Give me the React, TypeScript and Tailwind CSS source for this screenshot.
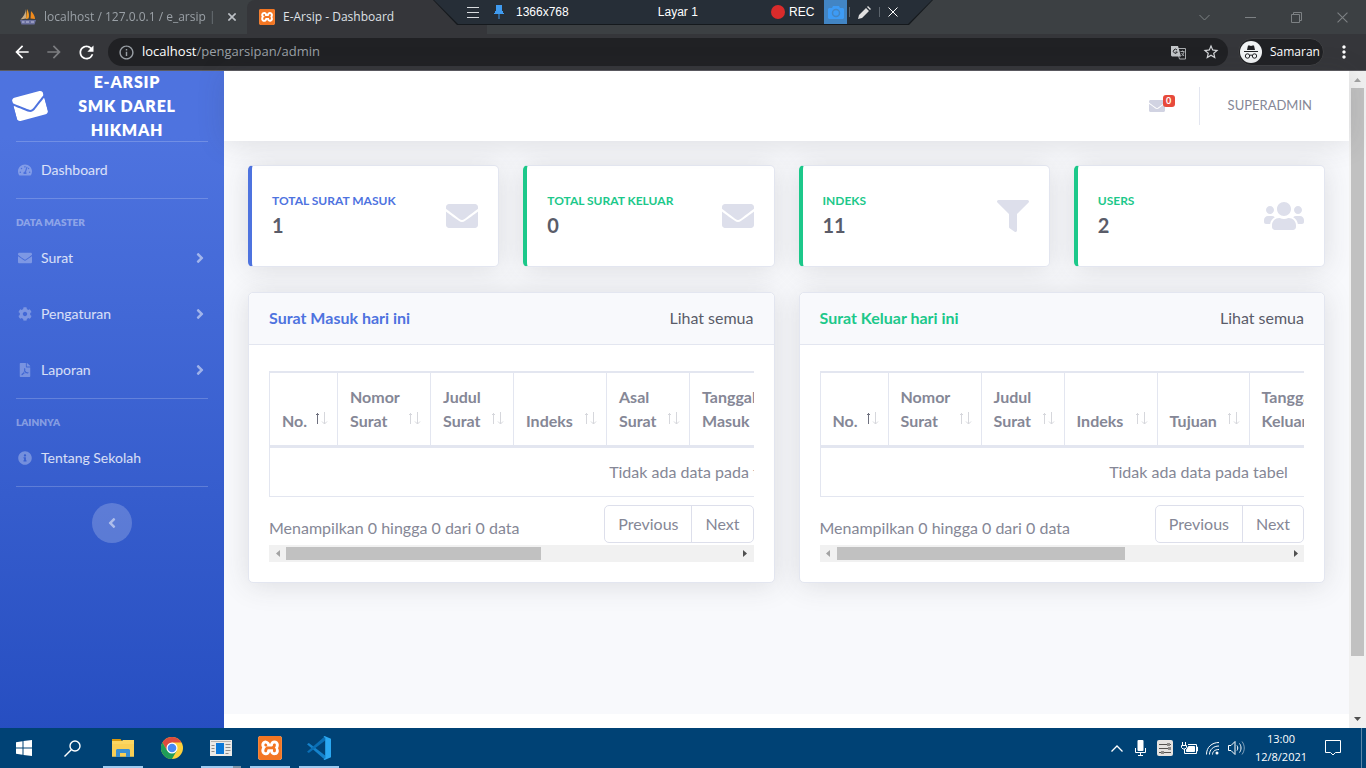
import type { ReactNode } from 'react';
import {
  FaAngleLeft,
  FaAngleRight,
  FaCog,
  FaEnvelope,
  FaFilePdf,
  FaFilter,
  FaInfoCircle,
  FaTachometerAlt,
  FaUsers,
} from 'react-icons/fa';
import { MdArrowBack, MdArrowForward, MdInfoOutline, MdMoreVert, MdRefresh, MdStarBorder } from 'react-icons/md';
import { SiXampp } from 'react-icons/si';

interface Column {
  label: string;
  width: string;
}

interface PanelProps {
  title: string;
  titleColor: string;
  tableWidth: string;
  thumbWidth: string;
  columns: Column[];
}

const STATS = [
  { label: 'Total Surat Masuk', value: 1, icon: <FaEnvelope />, border: 'border-l-[#4e73df]', text: 'text-[#4e73df]' },
  { label: 'Total Surat Keluar', value: 0, icon: <FaEnvelope />, border: 'border-l-[#1cc88a]', text: 'text-[#1cc88a]' },
  { label: 'Indeks', value: 11, icon: <FaFilter />, border: 'border-l-[#1cc88a]', text: 'text-[#1cc88a]' },
  { label: 'Users', value: 2, icon: <FaUsers size={40} />, border: 'border-l-[#1cc88a]', text: 'text-[#1cc88a]' },
];

const MASUK_COLUMNS: Column[] = [
  { label: 'No.', width: 'w-[68px]' },
  { label: 'Nomor Surat', width: 'w-[93px]' },
  { label: 'Judul Surat', width: 'w-[83px]' },
  { label: 'Indeks', width: 'w-[93px]' },
  { label: 'Asal Surat', width: 'w-[83px]' },
  { label: 'Tanggal Masuk', width: 'w-[100px]' },
  { label: '', width: 'w-[338px]' },
];

const KELUAR_COLUMNS: Column[] = [
  { label: 'No.', width: 'w-[68px]' },
  { label: 'Nomor Surat', width: 'w-[93px]' },
  { label: 'Judul Surat', width: 'w-[83px]' },
  { label: 'Indeks', width: 'w-[93px]' },
  { label: 'Tujuan', width: 'w-[92px]' },
  { label: 'Tanggal Keluar', width: 'w-[100px]' },
  { label: '', width: 'w-[228px]' },
];

export default function App() {
  return (
    <div className="flex h-screen flex-col overflow-hidden font-['Open_Sans',sans-serif]">
      <BrowserChrome />
      <div className="flex min-h-0 flex-1 font-['Lato',sans-serif] text-[#858796]">
        <Sidebar />
        <div className="flex min-w-0 flex-1 flex-col bg-[#f8f9fc]">
          <Topbar />
          <main className="flex flex-1 flex-col gap-[25px] px-6 pt-6">
            <div className="grid grid-cols-4 gap-6">
              {STATS.map((s) => (
                <div
                  key={s.label}
                  className={`flex h-[102px] items-center justify-between rounded-[5px] border border-l-4 border-[#e3e6f0] bg-white px-5 shadow-[0_2px_28px_rgba(58,59,69,0.15)] ${s.border}`}
                >
                  <div>
                    <div className={`text-[12px] leading-4 font-bold uppercase ${s.text}`}>{s.label}</div>
                    <div className="mt-0.5 text-xl leading-7 font-bold text-[#5a5c69]">{s.value}</div>
                  </div>
                  <span className="text-[32px] text-[#dddfeb]">{s.icon}</span>
                </div>
              ))}
            </div>
            <div className="grid grid-cols-2 gap-6">
              <TablePanel
                title="Surat Masuk hari ini"
                titleColor="text-[#4e73df]"
                tableWidth="w-[858px]"
                thumbWidth="w-[255px]"
                columns={MASUK_COLUMNS}
              />
              <TablePanel
                title="Surat Keluar hari ini"
                titleColor="text-[#1cc88a]"
                tableWidth="w-[757px]"
                thumbWidth="w-[288px]"
                columns={KELUAR_COLUMNS}
              />
            </div>
          </main>
          <footer className="h-3.5 bg-white" />
        </div>
        <PageScrollbar />
      </div>
      <Taskbar />
    </div>
  );
}

/* ---------- browser ---------- */

function BrowserChrome() {
  return (
    <header className="relative border-b border-[#5c5b60] bg-[#35363a]">
      <div className="flex h-[34px] bg-[#3c4043] text-[12px]">
        <div className="flex w-[247px] items-center rounded-br-lg pr-2.5 pl-5 text-[#9aa0a6]">
          <SailLogo />
          <span className="ml-2 w-[176px] overflow-hidden whitespace-nowrap [mask-image:linear-gradient(to_right,black_92%,transparent)]">
            localhost / 127.0.0.1 / e_arsip | php
          </span>
          <button aria-label="Close tab" className="ml-2 text-[#bdc1c6]">
            <CrossIcon size={8} weight={2} />
          </button>
        </div>
        <div className="flex w-[240px] items-center gap-2 rounded-t-lg bg-[#35363a] pl-3 text-[#dfe1e5]">
          <XamppLogo size={16} />
          <span>E-Arsip - Dashboard</span>
        </div>
        <div className="flex flex-1 items-center justify-end gap-[35px] pr-[18px] text-[#7d8184]">
          <button aria-label="Search tabs">
            <svg width="11" height="11" viewBox="0 0 11 11" fill="none" stroke="currentColor">
              <path d="M.5 3l5 5 5-5" />
            </svg>
          </button>
          <button aria-label="Minimize">
            <svg width="11" height="11" viewBox="0 0 11 11" fill="none" stroke="currentColor">
              <path d="M0 5.500h11" />
            </svg>
          </button>
          <button aria-label="Restore">
            <svg width="11" height="11" viewBox="0 0 11 11" fill="none" stroke="currentColor">
              <path d="M.5 2.500h8v8h-8zM2.500 2.500v-2h8v8h-2" />
            </svg>
          </button>
          <button aria-label="Close window">
            <CrossIcon size={11} weight={1} />
          </button>
        </div>
      </div>

      <div className="flex h-9 items-center pr-3 pl-3 text-white">
        <button aria-label="Back" className="w-8"><MdArrowBack size={20} /></button>
        <button aria-label="Forward" className="w-8 text-[#7c7d80]"><MdArrowForward size={20} /></button>
        <button aria-label="Reload" className="w-8"><MdRefresh size={21} /></button>
        <div className="flex h-7 flex-1 items-center rounded-full bg-[#202124] pr-2 pl-2.5">
          <MdInfoOutline size={17} className="text-[#9aa0a6]" />
          <div className="ml-[7px] flex-1 text-[13px] text-[#9aa0a6]">
            <span className="text-white">localhost</span>/pengarsipan/admin
          </div>
          <TranslateIcon />
          <MdStarBorder size={18} className="ml-4 text-[#d5d7da]" />
        </div>
        <div className="ml-2.5 flex h-7 w-[86px] items-center gap-2 rounded-full border border-[#3f4043] bg-[#202124] pl-px text-[12px]">
          <IncognitoIcon />
          <span>Samaran</span>
        </div>
        <button aria-label="Menu" className="ml-2.5"><MdMoreVert size={20} /></button>
      </div>

      <RecorderBar />
    </header>
  );
}

// Floating capture bar pinned to the top centre of the screen
function RecorderBar() {
  return (
    <div className="absolute top-0 left-1/2 w-[500px] -translate-x-1/2 bg-[#15191d] [clip-path:polygon(0_0,100%_0,calc(100%-24px)_100%,24px_100%)]">
      <div className="mx-px mb-px flex h-6 items-center bg-[#262e37] pr-[34px] pl-[33px] font-['Liberation_Sans',sans-serif] text-[12px] text-white [clip-path:polygon(0_0,100%_0,calc(100%-24px)_100%,24px_100%)]">
        <button aria-label="Menu">
          <svg width="12" height="12" viewBox="0 0 12 12" stroke="#d9dcdf">
            <path d="M0 1.500h12M0 6.500h12M0 11.500h12" />
          </svg>
        </button>
        <button aria-label="Pin" className="ml-[15px]">
          <svg width="10" height="14" viewBox="0 0 10 14" fill="#3f9bf0">
            <path d="M2 0h6v6h1v2H1V6h1zM0 8h10v1H0zM4.500 9h1v5h-1z" />
          </svg>
        </button>
        <span className="ml-3 w-[144px]">1366x768</span>
        <span className="w-[115px]">Layar 1</span>
        <button className="flex items-center gap-1">
          <span className="h-3.5 w-3.5 rounded-full bg-[#d92b2b]" />
          REC
        </button>
        <button aria-label="Screenshot" className="ml-2.5 flex h-6 w-[23px] items-center justify-center bg-[#4285c4]">
          <svg width="16" height="13" viewBox="0 0 16 13">
            <path fill="#3d9bf5" d="M1 2h3l1-2h6l1 2h3l1 1v9l-1 1H1l-1-1V3z" />
            <circle cx="8" cy="7" r="3.500" fill="none" stroke="#4285c4" strokeWidth="1.500" />
          </svg>
        </button>
        <span className="mr-2 ml-0.5 h-2.5 w-px bg-[#5b636b]" />
        <button aria-label="Draw">
          <svg width="13" height="13" viewBox="0 0 13 13" fill="#e0e0e0">
            <path d="M0 13l1-4L8 2l3 3-7 7zM9 1l1-1 3 3-1 1z" />
          </svg>
        </button>
        <span className="mx-2 h-2.5 w-px bg-[#5b636b]" />
        <button aria-label="Close recorder">
          <CrossIcon size={10} weight={1} />
        </button>
      </div>
    </div>
  );
}

/* ---------- dashboard ---------- */

function Sidebar() {
  return (
    <nav className="flex w-56 shrink-0 flex-col bg-linear-to-b from-[#4e73df] from-10% to-[#224abe] to-110% text-white">
      <a href="#" className="flex h-[70px] items-center gap-7 pl-3.5">
        <FaEnvelope size={32} className="-rotate-15" />
        <span className="w-[106px] text-center leading-6 font-extrabold tracking-wider uppercase">
          E-Arsip SMK Darel Hikmah
        </span>
      </a>
      <Divider />
      <NavItem icon={<FaTachometerAlt />} label="Dashboard" />
      <Divider />
      <NavHeading>Data Master</NavHeading>
      <NavItem icon={<FaEnvelope />} label="Surat" expandable />
      <NavItem icon={<FaCog />} label="Pengaturan" expandable />
      <NavItem icon={<FaFilePdf />} label="Laporan" expandable />
      <Divider />
      <NavHeading>Lainnya</NavHeading>
      <NavItem icon={<FaInfoCircle />} label="Tentang Sekolah" />
      <Divider />
      <button
        aria-label="Toggle sidebar"
        className="mt-4 flex h-10 w-10 items-center justify-center self-center rounded-full bg-white/20 text-white/50"
      >
        <FaAngleLeft size={16} />
      </button>
    </nav>
  );
}

function Divider() {
  return <hr className="mx-4 border-white/20" />;
}

function NavHeading({ children }: { children: ReactNode }) {
  return <div className="mt-4 px-4 text-[10px] leading-[15px] font-extrabold text-white/40 uppercase">{children}</div>;
}

function NavItem({ icon, label, expandable }: { icon: ReactNode; label: string; expandable?: boolean }) {
  return (
    <a href="#" className="flex h-14 items-center px-4 text-sm text-white/80">
      <span className="flex w-[18px] justify-center text-white/30">{icon}</span>
      <span className="ml-[7px] flex-1">{label}</span>
      {expandable && <FaAngleRight size={16} className="text-white/50" />}
    </a>
  );
}

function Topbar() {
  return (
    <div className="z-10 flex h-[70px] items-center justify-end bg-white pr-[37px] shadow-[0_2px_28px_rgba(58,59,69,0.15)]">
      <a href="#" aria-label="Pesan" className="relative text-[#d1d3e2]">
        <FaEnvelope size={16} />
        <span className="absolute -top-[3px] left-3.5 flex h-3 w-3 items-center justify-center rounded-[3px] bg-[#e74a3b] text-[9px] font-bold text-white">
          0
        </span>
      </a>
      <div className="mr-7 ml-[34px] h-[38px] w-px bg-[#e3e6f0]" />
      <a href="#" className="text-[13px]">SUPERADMIN</a>
    </div>
  );
}

function TablePanel({ title, titleColor, tableWidth, thumbWidth, columns }: PanelProps) {
  return (
    <section className="min-w-0 rounded-[5px] border border-[#e3e6f0] bg-white shadow-[0_2px_28px_rgba(58,59,69,0.15)]">
      <div className="flex h-[52px] items-center justify-between rounded-t-[5px] border-b border-[#e3e6f0] bg-[#f8f9fc] px-5 pb-0.5">
        <h6 className={`font-bold ${titleColor}`}>{title}</h6>
        <a href="#" className="text-[#5a5c69]">Lihat semua</a>
      </div>
      <div className="p-5">
        <div className="overflow-hidden pt-1.5">
          <table className={`table-fixed border-separate border-spacing-0 ${tableWidth}`}>
            <thead>
              <tr>
                {columns.map((c, i) => (
                  <th
                    key={c.label}
                    className={`border-t-2 border-b-[3px] border-l border-[#e3e6f0] py-3 pr-[9px] pl-3 text-left align-bottom font-bold ${c.width}`}
                  >
                    <div className="flex items-end justify-between leading-6">
                      <span>{c.label}</span>
                      <SortArrows active={i === 0} />
                    </div>
                  </th>
                ))}
              </tr>
            </thead>
            <tbody>
              <tr>
                <td colSpan={columns.length} className="border-b border-l border-[#e3e6f0] p-3 text-center leading-6">
                  Tidak ada data pada tabel
                </td>
              </tr>
            </tbody>
          </table>
        </div>
        <div className="mt-2 flex items-start justify-between">
          <span className="pt-[11px] leading-6">Menampilkan 0 hingga 0 dari 0 data</span>
          <div className="flex h-[38px] rounded-[5px] border border-[#dddfeb]">
            <button className="px-[13px]">Previous</button>
            <button className="border-l border-[#dddfeb] px-[13px]">Next</button>
          </div>
        </div>
        <div className="mt-0.5 flex h-[17px] items-center bg-[#f1f1f1]">
          <span className="flex w-[17px] justify-center">
            <svg width="4" height="7" viewBox="0 0 4 7" fill="#a3a3a3"><path d="M4 0v7L0 3.500z" /></svg>
          </span>
          <div className={`h-[13px] bg-[#c1c1c1] ${thumbWidth}`} />
          <span className="ml-auto flex w-[17px] justify-center">
            <svg width="4" height="7" viewBox="0 0 4 7" fill="#505050"><path d="M0 0v7l4-3.500z" /></svg>
          </span>
        </div>
      </div>
    </section>
  );
}

function SortArrows({ active }: { active: boolean }) {
  return (
    <svg width="14" height="13" viewBox="0 0 14 13" fill="none" className="mb-2 shrink-0">
      <path d="M3.500 1v11M2 2.500h3" stroke={active ? '#6e707e' : '#d6d7dc'} />
      <path d="M10.500 0v12M8 9.500l2.500 2.500 2.500-2.500" stroke="#d6d7dc" />
    </svg>
  );
}

function PageScrollbar() {
  return (
    <div className="flex w-[17px] shrink-0 flex-col items-center bg-[#f1f1f1]">
      <span className="flex h-[17px] items-center">
        <svg width="7" height="4" viewBox="0 0 7 4" fill="#a3a3a3"><path d="M0 4h7L3.500 0z" /></svg>
      </span>
      <div className="w-[13px] flex-1 bg-[#c1c1c1]" />
      <span className="flex h-[72px] items-end pb-[7px]">
        <svg width="7" height="4" viewBox="0 0 7 4" fill="#505050"><path d="M0 0h7L3.500 4z" /></svg>
      </span>
    </div>
  );
}

/* ---------- taskbar ---------- */

function Taskbar() {
  return (
    <footer className="flex h-10 shrink-0 bg-[#004275] text-white">
      <button aria-label="Start" className="flex w-12 items-center justify-center">
        <svg width="16" height="16" viewBox="0 0 16 16" fill="white">
          <path d="M0 2.200L6.500 1.300V7.500H0zM7.500 1.100L16 0v7.500H7.500zM0 8.500h6.500v6.200L0 13.800zM7.500 8.500H16V16l-8.500-1.100z" />
        </svg>
      </button>
      <button aria-label="Search" className="mr-0.5 flex w-12 items-center justify-center">
        <svg width="17" height="17" viewBox="0 0 17 17" fill="none" stroke="white" strokeWidth="1.400">
          <circle cx="11" cy="6" r="5" />
          <path d="M7.500 9.500L.5 16.500" />
        </svg>
      </button>
      <TaskButton label="File Explorer" running><ExplorerLogo /></TaskButton>
      <TaskButton label="Chrome"><ChromeLogo /></TaskButton>
      <TaskButton label="Window list" running stacked><WindowLogo /></TaskButton>
      <TaskButton label="XAMPP" running><XamppLogo size={24} /></TaskButton>
      <TaskButton label="Visual Studio Code" running><VsCodeLogo /></TaskButton>

      <div className="ml-auto flex items-center">
        <svg width="12" height="7" viewBox="0 0 12 7" fill="none" stroke="white" strokeWidth="1.300">
          <path d="M.5 6.500L6 1l5.500 5.500" />
        </svg>
        <svg width="11" height="16" viewBox="0 0 11 16" fill="none" stroke="white" className="ml-3">
          <rect x="2.500" width="6" height="11" rx="1" fill="white" stroke="none" />
          <path d="M.5 8v4.500h10V8M5.500 12v3M3 15.500h5" />
        </svg>
        <svg width="16" height="16" viewBox="0 0 16 16" className="ml-[11px]">
          <rect width="16" height="16" rx="2" fill="#e6e3e0" />
          <path d="M2 4.500h12M2 8.500h12M2 12.500h12" stroke="#55524f" />
          <path d="M10 3h3v3h-3zM11 7h3v3h-3zM4 11h3v3H4z" fill="#8d8a87" />
        </svg>
        <svg width="17" height="13" viewBox="0 0 17 13" fill="none" stroke="white" className="ml-2">
          <path d="M1.500 0v3M4.500 0v3M.5 3.500h5v2L4 7H2L.5 5.500zM3.500 7v4.500h12v-9H7M15.500 5h1v4h-1" />
          <path d="M7.500 4.500h6v5h-8V8z" fill="white" />
        </svg>
        <svg width="14" height="14" viewBox="0 0 14 14" fill="none" stroke="white" className="ml-2">
          <path d="M.5 13.500C.5 6 6 1.500 13 1.500M3.500 13.500c0-5 4-8.500 9.500-8.500M6.500 13.500c0-3 2.500-5 6.500-5" />
          <circle cx="11" cy="12" r="1.500" fill="white" stroke="none" />
        </svg>
        <svg width="17" height="14" viewBox="0 0 17 14" fill="none" stroke="white" className="ml-2">
          <path d="M.5 4.500h2.500l4-4v13l-4-4H.5zM9 4.500c1 1.500 1 3.500 0 5M11.500 2.500c2 2.500 2 6.500 0 9" />
          <path d="M14 .5c3 4 3 9 0 13" opacity=".5" />
        </svg>
        <div className="w-[72px] text-center text-[11px] leading-[18px]">
          <div>13:00</div>
          <div>12/8/2021</div>
        </div>
        <button aria-label="Notifications" className="mr-5 ml-2">
          <svg width="16" height="16" viewBox="0 0 16 16" fill="none" stroke="white">
            <path d="M.5 .5h15v12h-5L8 15l-2.500-2.500h-5z" />
          </svg>
        </button>
        <span className="mr-1 h-10 w-px bg-[#5d86a8]" />
      </div>
    </footer>
  );
}

interface TaskButtonProps {
  label: string;
  running?: boolean;
  stacked?: boolean;
  children: ReactNode;
}

function TaskButton({ label, running, stacked, children }: TaskButtonProps) {
  return (
    <button aria-label={label} className="flex w-[49px] flex-col items-center">
      <span className="flex h-[38px] items-center pt-0.5">{children}</span>
      {running && (
        <span className="flex h-0.5 w-10">
          <span className="flex-1 bg-[#9dcbf1]" />
          {stacked && <span className="w-2 bg-[#7a94a8]" />}
        </span>
      )}
    </button>
  );
}

/* ---------- icons ---------- */

function CrossIcon({ size, weight }: { size: number; weight: number }) {
  return (
    <svg width={size} height={size} viewBox="0 0 10 10" fill="none" stroke="currentColor" strokeWidth={weight}>
      <path d="M.5 .5l9 9M9.500 .5l-9 9" />
    </svg>
  );
}

function SailLogo() {
  return (
    <svg width="16" height="16" viewBox="0 0 16 16" className="shrink-0">
      <path d="M6 0C5.500 4 3.500 8 .5 10.500L6 9.500z" fill="#c9ad86" />
      <path d="M7 0c2 3 2.500 7 1.500 9.500L6 10z" fill="#f59b23" />
      <path d="M11 2c2.500 2.500 4 5.500 4 8l-4.500-.5z" fill="#f08a1c" />
      <path d="M0 11h16l-1.500 4.500h-13z" fill="#6a6f9e" />
      <path d="M2 13h2.500M6 13h3M11 13h3" stroke="#c4c7e0" />
    </svg>
  );
}

function XamppLogo({ size }: { size: number }) {
  return (
    <span className="flex shrink-0 rounded-[3px] bg-white">
      <SiXampp size={size} color="#f37623" />
    </span>
  );
}

function TranslateIcon() {
  return (
    <svg width="15" height="15" viewBox="0 0 15 15">
      <path d="M5.500 3.500h9v10.500h-6z" fill="#202124" stroke="#a9acaf" />
      <path d="M0 1h7l3 10.500H1l-1-1z" fill="#c3c6c9" />
      <path d="M6 5A2 2 0 106.300 7H4.500" fill="none" stroke="#202124" />
      <path d="M9.500 6.500h4M11.500 5.500v1M13 7c-.5 2-1.500 3-2.500 4M10.500 8l2.500 3" fill="none" stroke="#a9acaf" />
    </svg>
  );
}

function IncognitoIcon() {
  return (
    <svg width="22" height="22" viewBox="0 0 22 22" className="shrink-0">
      <circle cx="11" cy="11" r="11" fill="#f1f3f4" />
      <path d="M8 4.500h1.500l1.500.5 1.500-.5H14L15 9H7z" fill="#202124" />
      <path d="M4 10.500h14M9.500 14.500q1.500-1 3 0" stroke="#202124" fill="none" />
      <circle cx="7.500" cy="15" r="2.200" stroke="#202124" fill="none" />
      <circle cx="14.500" cy="15" r="2.200" stroke="#202124" fill="none" />
    </svg>
  );
}

function ExplorerLogo() {
  return (
    <svg width="22" height="18" viewBox="0 0 22 18">
      <path d="M0 0h8.500l1.500 2H0z" fill="#d9980c" />
      <path d="M0 2h10l1-1h11v16.500H0z" fill="#fbd661" />
      <path d="M0 5h22v12.500H0z" fill="#f9cf55" />
      <path d="M4 11l1-1h12l1 1v7h-4v-4H8v4H4z" fill="#3a8fd3" />
    </svg>
  );
}

function ChromeLogo() {
  return (
    <svg width="22" height="22" viewBox="0 0 22 22">
      <circle cx="11" cy="11" r="11" fill="#fdd03b" />
      <path d="M1.470 5.500A11 11 0 0120.530 5.500H11L6.240 13.750z" fill="#dd4b3e" />
      <path d="M1.470 5.500A11 11 0 0011 22l4.760-8.250h-9.520z" fill="#1f9d58" />
      <circle cx="11" cy="11" r="5.500" fill="white" />
      <circle cx="11" cy="11" r="4.300" fill="#4789f4" />
    </svg>
  );
}

function WindowLogo() {
  return (
    <svg width="22" height="16" viewBox="0 0 22 16">
      <path d="M0 0h22v16H0z" fill="#eceae7" />
      <path d="M1 1.500h20" stroke="#b8b5b2" />
      <path d="M6 3h8v11H6z" fill="#0b78d8" />
      <path d="M1.500 5.500h3M1.500 8.500h3M1.500 11.500h3M15.500 4.500h5M15.500 7.500h5M15.500 10.500h5M15.500 13.500h3" stroke="#8f8d8b" />
    </svg>
  );
}

function VsCodeLogo() {
  return (
    <svg width="24" height="24" viewBox="0 0 24 24">
      <path d="M0 8.300L1.800 7l16.400 12.400V24z" fill="#1583cc" />
      <path d="M0 15.700L1.800 17 18.200 4.600V0z" fill="#0b6fb5" />
      <path d="M17.500 0L24 2.800v18.400L17.500 24l-1-.8 1.700-1V1.800l-1.700-1z" fill="#2aa8f2" />
    </svg>
  );
}
